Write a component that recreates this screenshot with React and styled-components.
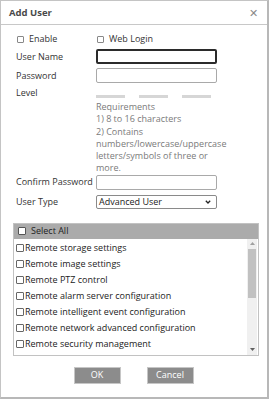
import React from "react";
import styled, { createGlobalStyle } from "styled-components";

const Global = createGlobalStyle`
  html, body { margin: 0; padding: 0; background: #fff; }
  body { font-family: "Open Sans", "Noto Sans", sans-serif; font-size: 9px; line-height: 12px; color: #333; }
  * { box-sizing: border-box; }
`;

const Dialog = styled.div`
  width: 269px;
  height: 399px;
  border: 1px solid #c4c4c4;
  border-right: 2px solid #b8b8b8;
  border-bottom: 2px solid #b8b8b8;
  background: #fff;
  display: flex;
  flex-direction: column;
`;

const Header = styled.div`
  height: 24px;
  flex: none;
  border-bottom: 1px solid #c8c8c8;
  display: flex;
  align-items: center;
  justify-content: space-between;
  padding: 0 9px 0 8px;
`;

const Title = styled.div`
  font-weight: 700;
  font-size: 9.5px;
  color: #4a4a4a;
`;

const Close = styled.div`
  font-size: 11px;
  color: #8a8a8a;
  line-height: 1;
`;

const Body = styled.div`
  padding: 7px 0 0 14px;
  display: flex;
  flex-direction: column;
`;

const CheckRow = styled.div`
  display: grid;
  grid-template-columns: 80px 1fr;
  height: 14px;
  align-items: center;
  padding-left: 2px;
`;

const CheckLabel = styled.label`
  display: flex;
  align-items: center;
  gap: 5px;
  color: #333;
`;

const Box = styled.span`
  width: ${p => p.$size || 8}px;
  height: ${p => p.$size || 8}px;
  flex: none;
  border: 1px solid ${p => p.$color || "#777"};
  border-radius: 1px;
  display: inline-block;
  background: #fff;
`;

const FormRow = styled.div`
  display: grid;
  grid-template-columns: 81px 121px;
  height: ${p => p.$h || 15}px;
  align-items: ${p => (p.$top ? "start" : "center")};
  margin-top: ${p => p.$mt || 0}px;
`;

const Label = styled.div`
  color: #333;
  padding-left: 1px;
  white-space: nowrap;
`;

const Input = styled.div`
  height: 15px;
  border: ${p => (p.$focus ? "2px solid #2b2b2b" : "1px solid #a9a9a9")};
  border-radius: 2px;
  background: #fff;
`;

const Select = styled.div`
  height: 14px;
  border: 1px solid #8a8a8a;
  border-radius: 2px;
  display: flex;
  align-items: center;
  justify-content: space-between;
  padding: 0 5px 0 2px;
  color: #222;
`;

const Bars = styled.div`
  display: flex;
  gap: 14px;
  padding-top: 8px;
`;

const Bar = styled.div`
  width: 29px;
  height: 3px;
  background: #d6d6d6;
`;

const Req = styled.div`
  margin-left: 81px;
  margin-top: 2px;
  width: 124px;
  line-height: 12.3px;
  color: #7a7a7a;
`;

const Perm = styled.div`
  margin: 13px 0 0 12px;
  width: 246px;
  border: 1px solid #c2c2c2;
  display: flex;
  flex-direction: column;
`;

const PermHead = styled.div`
  height: 15px;
  background: #ababab;
  display: flex;
  align-items: center;
  gap: 5px;
  padding-left: 4px;
  color: #222;
`;

const PermBody = styled.div`
  display: flex;
  height: 116px;
`;

const PermList = styled.div`
  flex: 1;
  padding-top: 1px;
  overflow: hidden;
`;

const PermItem = styled.div`
  height: 16px;
  display: flex;
  align-items: center;
  gap: 1px;
  padding-left: 2px;
  color: #222;
  white-space: nowrap;
`;

const Scroll = styled.div`
  width: 10px;
  margin-right: 1px;
  background: #f0f0f0;
  display: flex;
  flex-direction: column;
  align-items: center;
`;

const Arrow = styled.div`
  height: 10px;
  flex: none;
  display: flex;
  align-items: center;
  justify-content: center;
`;

const Thumb = styled.div`
  width: 8px;
  height: 49px;
  background: #c1c1c1;
`;

const Spacer = styled.div`
  flex: 1;
`;

const Buttons = styled.div`
  display: flex;
  justify-content: center;
  gap: 26px;
  margin-top: 11px;
  padding-right: 1px;
`;

const Button = styled.div`
  width: 47px;
  height: 17px;
  background: #8c8c8c;
  border: 1px solid #c6c6c6;
  color: #fff;
  display: flex;
  align-items: center;
  justify-content: center;
`;

const perms = [
  "Remote storage settings",
  "Remote image settings",
  "Remote PTZ control",
  "Remote alarm server configuration",
  "Remote intelligent event configuration",
  "Remote network advanced configuration",
  "Remote security management",
];

export default function App() {
  return (
    <>
      <Global />
      <Dialog>
        <Header>
          <Title>Add User</Title>
          <Close>✕</Close>
        </Header>
        <Body>
          <CheckRow>
            <CheckLabel><Box $size={7} $color="#888" />Enable</CheckLabel>
            <CheckLabel><Box $size={7} $color="#888" />Web Login</CheckLabel>
          </CheckRow>
          <FormRow $mt={3}>
            <Label>User Name</Label>
            <Input $focus />
          </FormRow>
          <FormRow $mt={4}>
            <Label>Password</Label>
            <Input />
          </FormRow>
          <FormRow $mt={4} $h={12} $top>
            <Label>Level</Label>
            <Bars><Bar /><Bar /><Bar /></Bars>
          </FormRow>
          <Req>
            Requirements<br />
            1) 8 to 16 characters<br />
            2) Contains numbers/lowercase/uppercase letters/symbols of three or more.
          </Req>
          <FormRow $mt={0}>
            <Label>Confirm Password</Label>
            <Input />
          </FormRow>
          <FormRow $mt={5}>
            <Label>User Type</Label>
            <Select>
              <span>Advanced User</span>
              <svg width="6" height="4" viewBox="0 0 6 4"><path d="M0.8 0.8 L3 3 L5.2 0.8" stroke="#222" strokeWidth="1.3" fill="none" /></svg>
            </Select>
          </FormRow>
        </Body>
        <Perm>
          <PermHead><Box $size={8} $color="#555" />Select All</PermHead>
          <PermBody>
            <PermList>
              {perms.map(p => (
                <PermItem key={p}><Box $size={8} $color="#666" />{p}</PermItem>
              ))}
            </PermList>
            <Scroll>
              <Arrow>
                <svg width="5" height="3" viewBox="0 0 5 3"><path d="M0 3 L2.5 0 L5 3Z" fill="#a0a0a0" /></svg>
              </Arrow>
              <Thumb />
              <Spacer />
              <Arrow>
                <svg width="5" height="3" viewBox="0 0 5 3"><path d="M0 0 L2.5 3 L5 0Z" fill="#606060" /></svg>
              </Arrow>
            </Scroll>
          </PermBody>
        </Perm>
        <Buttons>
          <Button>OK</Button>
          <Button>Cancel</Button>
        </Buttons>
      </Dialog>
    </>
  );
}
